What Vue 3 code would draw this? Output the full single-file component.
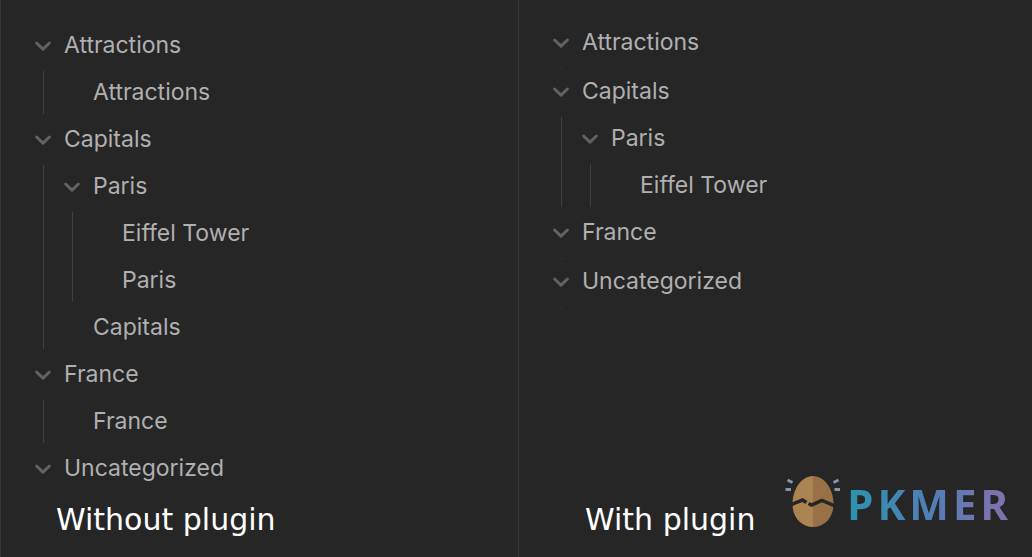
<template>
  <main class="compare">
    <section v-for="panel in panels" :key="panel.title" class="panel" :class="panel.side">
      <ul class="tree">
        <TreeNode v-for="node in panel.nodes" :key="node.name" :node="node" />
      </ul>
      <h2 class="caption">{{ panel.title }}</h2>
    </section>

    <div class="brand">
      <svg class="egg" width="56" height="54" viewBox="0 0 56 54" aria-hidden="true">
        <path d="M28 1C16 1 7.5 15 7.5 29C7.5 43 17 52 28 52Z" fill="#ac8452" />
        <path d="M28 1C40 1 48.5 15 48.5 29C48.5 43 39 52 28 52Z" fill="#9a7046" />
        <path
          d="M6 30L11 27.5L17.5 25L21.5 27.5M23.5 28.5L26.5 30L37 25.5L50 31"
          fill="none"
          stroke="#262626"
          stroke-width="3.5"
        />
        <path
          d="M2.5 5L7.5 7.5M0.5 14.5H6M53.5 5L48.5 7.5M49.5 14.5H55"
          fill="none"
          stroke="#8297ad"
          stroke-width="3"
        />
      </svg>
      <span class="wordmark"><span v-for="letter in 'PKMER'" :key="letter">{{ letter }}</span></span>
    </div>
  </main>
</template>

<script setup>
import { h, ref } from "vue";

const panels = ref([
  {
    title: "Without plugin",
    side: "left",
    nodes: [
      { name: "Attractions", open: true, children: [{ name: "Attractions" }] },
      {
        name: "Capitals",
        open: true,
        children: [
          {
            name: "Paris",
            open: true,
            children: [{ name: "Eiffel Tower" }, { name: "Paris" }],
          },
          { name: "Capitals" },
        ],
      },
      { name: "France", open: true, children: [{ name: "France" }] },
      { name: "Uncategorized", open: true },
    ],
  },
  {
    title: "With plugin",
    side: "right",
    nodes: [
      { name: "Attractions", open: true, children: [] },
      {
        name: "Capitals",
        open: true,
        children: [
          { name: "Paris", open: true, children: [{ name: "Eiffel Tower" }] },
        ],
      },
      { name: "France", open: true, children: [] },
      { name: "Uncategorized", open: true, children: [] },
    ],
  },
]);

const chevron = () =>
  h("svg", { class: "chevron", width: 18, height: 12, viewBox: "0 0 18 12" }, [
    h("path", { d: "M2.6 3L9 9.2L15.4 3" }),
  ]);

// Renders itself again for every nested folder
const TreeNode = ({ node }) => {
  if (node.open === undefined) {
    return h("li", [h("a", { class: "row leaf", href: "#" }, node.name)]);
  }
  return h("li", [
    h(
      "button",
      {
        type: "button",
        class: ["row", { closed: !node.open }],
        "aria-expanded": node.open,
        onClick: () => (node.open = !node.open),
      },
      [chevron(), node.name]
    ),
    node.open && node.children
      ? h(
          "ul",
          { class: ["children", { empty: !node.children.length }] },
          node.children.map((child) => h(TreeNode, { node: child, key: child.name }))
        )
      : null,
  ]);
};
TreeNode.props = ["node"];
</script>

<style>
body {
  margin: 0;
  background: #262626;
}
</style>

<style scoped>
.compare {
  position: relative;
  display: flex;
  min-height: 100vh;
  background: #262626;
  font-family: Inter, "Liberation Sans", sans-serif;
}

.panel {
  box-sizing: border-box;
  display: flex;
  flex: 1;
  flex-direction: column;
  padding: 24px 0 17px 33px;
  border-left: 1px solid #363636;
}

.panel.left {
  flex: 0 0 calc(50% + 2px);
}

.panel.right {
  padding-top: 21px;
}

.tree,
.tree :deep(ul) {
  display: flex;
  flex-direction: column;
  gap: 4px;
  list-style: none;
  margin: 0;
  padding: 0;
}

.tree :deep(.row) {
  display: flex;
  align-items: center;
  gap: 12px;
  padding: 0;
  border: none;
  background: transparent;
  color: #b0b0b0;
  font-family: inherit;
  font-size: 23px;
  font-weight: 400;
  line-height: 43px;
  text-decoration: none;
  cursor: pointer;
}

.tree :deep(.leaf) {
  padding-left: 30px;
}

.tree :deep(.chevron) {
  fill: none;
  stroke: #626262;
  stroke-width: 3;
  stroke-linecap: round;
  stroke-linejoin: round;
}

.tree :deep(.closed .chevron) {
  transform: rotate(-90deg);
}

.tree :deep(.children) {
  margin: 4px 0 0 9px;
  padding-left: 19px;
  border-left: 1px solid #404040;
}

.tree :deep(.empty) {
  height: 1px;
  margin-bottom: -3px;
}

.caption {
  margin: auto 0 0;
  padding-left: 22px;
  color: #ffffff;
  font-family: "DejaVu Sans", sans-serif;
  font-size: 30px;
  font-weight: 400;
  line-height: 40px;
}

.right .caption {
  padding-left: 33px;
}

.brand {
  position: absolute;
  right: 24px;
  bottom: 28px;
  display: flex;
  align-items: center;
  gap: 6px;
}

.wordmark {
  display: flex;
  gap: 4px;
  padding-top: 3px;
  background: linear-gradient(90deg, #2b93ad, #4f7fb5 50%, #8470ad);
  background-clip: text;
  color: transparent;
  font-family: "Noto Sans", sans-serif;
  font-size: 42px;
  font-weight: 700;
  line-height: 51px;
}
</style>
